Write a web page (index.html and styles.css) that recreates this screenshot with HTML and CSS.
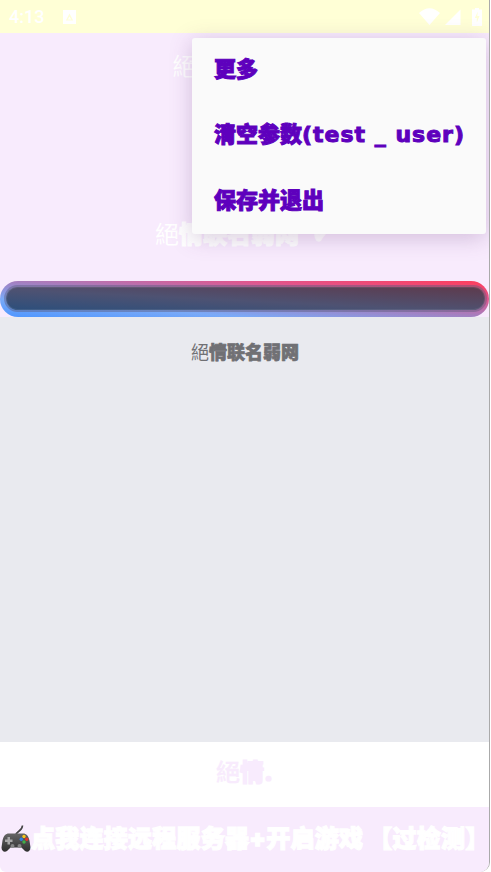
FILE: index.html
```html
<!DOCTYPE html>
<html>
<head>
  <title>絕情联名弱网</title>
  <link rel="stylesheet" href="styles.css">
</head>
<body>
  <div class="app">

    <div class="status">
      <span class="time">4:13</span>
      <svg class="notice" width="13" height="14" viewBox="0 0 13 14">
        <path fill="#fff" fill-rule="evenodd" d="M0 0h13v14H0zM6.500 3.500L2.800 10.500h7.400zM6.500 6.400L8.200 9.500H4.800z"/>
      </svg>
      <span class="status-right">
        <svg width="21" height="17" viewBox="0 0 21 17"><path fill="#fff" d="M0 5Q10.500 -4.500 21 5L10.500 17z"/></svg>
        <svg width="16" height="16" viewBox="0 0 16 16"><path fill="#fff" d="M15.500 0.500V16H0z"/></svg>
        <svg class="battery" width="10" height="18" viewBox="0 0 10 18">
          <path fill="#fff" fill-rule="evenodd" d="M3 0h4v1.500h3V18H0V1.500h3zM5.800 3.500L2.800 10h2v4.500L7.500 8H5.300z"/>
        </svg>
      </span>
    </div>

    <div class="head">
      <div class="toolbar"><span class="light">絕</span>情联名弱网</div>
      <div class="title"><span class="light">絕</span>情联名弱网<span class="tick">✔</span></div>
      <div class="bar"><div class="bar-inner"></div></div>
    </div>

    <div class="main">
      <div class="main-text"><span class="light">絕</span>情联名弱网</div>
    </div>

    <div class="brand"><span class="semi">絕</span>情.</div>

    <div class="start">
      <svg class="pad" width="30" height="30" viewBox="0 0 30 30">
        <defs>
          <linearGradient id="padFill" x1="0" y1="0" x2="0" y2="1">
            <stop offset="0" stop-color="#666"/>
            <stop offset="1" stop-color="#2e2e2e"/>
          </linearGradient>
        </defs>
        <path fill="none" stroke="#444" stroke-width="1.600" d="M15 11C15 7 21 8 21.500 1.500"/>
        <path fill="url(#padFill)" d="M8 9.500h14c3.500 0 5.500 2.500 6.500 7l1 7c0 3.500-3 5.500-5.500 3.500l-3.500-3.500H9.500L6 27c-2.500 2-5.500 0-5.500-3.500l1-7C2.500 12 4.500 9.500 8 9.500z"/>
        <path fill="#a8a8a8" d="M6.500 13h2.500v2.500h2.500V18H9v2.500H6.500V18H4v-2.500h2.500z"/>
        <circle cx="23" cy="12.500" r="1.700" fill="#f6c21c"/>
        <circle cx="20.300" cy="15.200" r="1.700" fill="#2f7fe0"/>
        <circle cx="25.700" cy="15.200" r="1.700" fill="#e0352c"/>
        <circle cx="23" cy="18" r="1.700" fill="#3fae49"/>
        <circle cx="11.500" cy="22" r="2" fill="#858585"/>
        <circle cx="18.500" cy="22" r="2" fill="#858585"/>
      </svg>
      <span>点我连接远程服务器+开启游戏 【过检测】</span>
    </div>

    <div class="menu">
      <div class="menu-item">更多</div>
      <div class="menu-item">清空参数<span class="latin">(test _ user)</span></div>
      <div class="menu-item">保存并退出</div>
    </div>

  </div>
</body>
</html>
```

FILE: styles.css
```css
* {
  box-sizing: border-box;
}

body {
  margin: 0;
  background: white;
  font-family: "Inter", "Noto Sans CJK SC", sans-serif;
  font-weight: 900;
}

.app {
  position: relative;
  display: flex;
  flex-direction: column;
  width: 490px;
  height: 872px;
  overflow: hidden;
  border-right: 1px solid #aaa;
  border-radius: 0 0 10px 6px;
}

.light {
  font-weight: 400;
  -webkit-text-stroke: 0;
}

.semi {
  font-weight: 500;
  -webkit-text-stroke: 0.3px #f8ebfd;
}

/* Status bar */
.status {
  display: flex;
  align-items: center;
  height: 33px;
  padding: 0 7px 0 9px;
  background: #ffffd6;
}

.time {
  color: white;
  font-family: "Roboto", sans-serif;
  font-size: 18px;
  font-weight: 500;
}

.notice {
  margin-left: 19px;
}

.status-right {
  display: flex;
  align-items: center;
  gap: 5px;
  margin-left: auto;
}

.battery {
  margin-left: 6px;
}

/* Header */
.head {
  display: flex;
  flex-direction: column;
  height: 284px;
  background: #f8ebfd;
  color: white;
  font-size: 24px;
  text-align: center;
  -webkit-text-stroke: 1.2px white;
}

.toolbar {
  height: 68px;
  line-height: 68px;
}

.title {
  height: 40px;
  margin-top: 113px;
  line-height: 40px;
}

.tick {
  margin-left: 13px;
  font-family: "DejaVu Sans", sans-serif;
  font-size: 26px;
}

.bar {
  height: 36px;
  margin-top: 27px;
  padding: 4px 2px 5px 4px;
  border-radius: 18px;
  background: linear-gradient(to top right, #4d96ff, #7aaaf8 25%, #a47fc0 50%, #e1558c 75%, #ff3c5a);
}

.bar-inner {
  height: 100%;
  border: 2px solid rgba(90, 90, 125, 0.45);
  border-radius: 14px;
  box-shadow: inset 0 0 0 1px rgba(255, 255, 255, 0.08);
  background: linear-gradient(to top right, #2c4f7c, #4e5272 45%, #5e3a4c);
  background-clip: padding-box;
}

/* Middle */
.main {
  flex: 1;
  padding: 23px 0 0 1px;
  background: #e9eaef;
  text-align: center;
}

.main-text {
  color: #707074;
  font-size: 18px;
  line-height: 26px;
  -webkit-text-stroke: 0.7px #707074;
}

/* Bottom */
.brand {
  height: 65px;
  background: white;
  color: #f8ebfd;
  font-size: 24px;
  line-height: 61px;
  text-align: center;
  -webkit-text-stroke: 1.2px #f8ebfd;
}

.start {
  display: flex;
  align-items: center;
  height: 65px;
  padding: 0 0 6px 1px;
  background: #f8ebfd;
  color: white;
  font-size: 24px;
  letter-spacing: 0.25px;
  white-space: nowrap;
  -webkit-text-stroke: 1.3px white;
}

.pad {
  flex: none;
  margin-top: 4px;
}

/* Overflow menu */
.menu {
  position: absolute;
  top: 38px;
  left: 192px;
  width: 294px;
  padding: 0 22px;
  border-radius: 3px;
  background: #fafafa;
  box-shadow: 0 4px 22px rgba(110, 70, 130, 0.28);
  color: #5e00bd;
  font-size: 22px;
  -webkit-text-stroke: 1px #5e00bd;
}

.menu-item {
  height: 65.300px;
  line-height: 62px;
  white-space: nowrap;
}

.latin {
  font-family: "DejaVu Sans", sans-serif;
  font-weight: 700;
  letter-spacing: 1px;
}
```
